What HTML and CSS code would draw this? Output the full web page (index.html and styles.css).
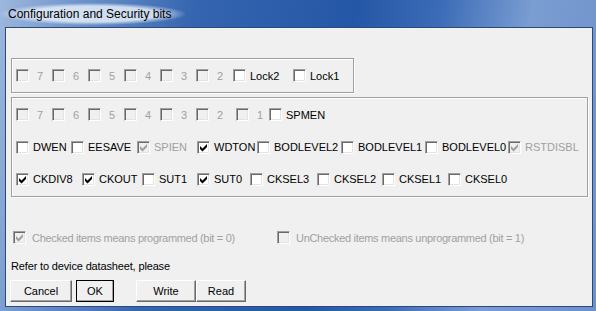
FILE: index.html
```html
<!DOCTYPE html>
<html lang="en">
<head>
<meta charset="UTF-8">
<title>Configuration and Security bits</title>
<link rel="stylesheet" href="styles.css">
</head>
<body>

<div class="window">
    <div class="titlebar"><span class="title">Configuration and Security bits</span></div>
    <div class="client">

        <div class="group lockbits">
            <div class="cb dis digit"><span class="box"></span><span class="txt">7</span></div>
            <div class="cb dis digit"><span class="box"></span><span class="txt">6</span></div>
            <div class="cb dis digit"><span class="box"></span><span class="txt">5</span></div>
            <div class="cb dis digit"><span class="box"></span><span class="txt">4</span></div>
            <div class="cb dis digit"><span class="box"></span><span class="txt">3</span></div>
            <div class="cb dis digit"><span class="box"></span><span class="txt">2</span></div>
            <div class="cb"><span class="box"></span><span class="txt">Lock2</span></div>
            <div class="cb"><span class="box"></span><span class="txt">Lock1</span></div>
        </div>

        <div class="group fusebits">
            <div class="row row-a">
                <div class="cb dis digit"><span class="box"></span><span class="txt">7</span></div>
                <div class="cb dis digit"><span class="box"></span><span class="txt">6</span></div>
                <div class="cb dis digit"><span class="box"></span><span class="txt">5</span></div>
                <div class="cb dis digit"><span class="box"></span><span class="txt">4</span></div>
                <div class="cb dis digit"><span class="box"></span><span class="txt">3</span></div>
                <div class="cb dis digit"><span class="box"></span><span class="txt">2</span></div>
                <div class="cb dis digit"><span class="box"></span><span class="txt">1</span></div>
                <div class="cb"><span class="box"></span><span class="txt">SPMEN</span></div>
            </div>
            <div class="row row-b">
                <div class="cb"><span class="box"></span><span class="txt">DWEN</span></div>
                <div class="cb"><span class="box"></span><span class="txt">EESAVE</span></div>
                <div class="cb dis"><span class="box"><svg viewBox="0 0 11 11" width="11" height="11"><polygon points="2,4 4.5,6.5 9,2 9,5 4.5,9.5 2,7"/></svg></span><span class="txt">SPIEN</span></div>
                <div class="cb clip"><span class="box"><svg viewBox="0 0 11 11" width="11" height="11"><polygon points="2,4 4.5,6.5 9,2 9,5 4.5,9.5 2,7"/></svg></span><span class="txt">WDTON</span></div>
                <div class="cb"><span class="box"></span><span class="txt">BODLEVEL2</span></div>
                <div class="cb"><span class="box"></span><span class="txt">BODLEVEL1</span></div>
                <div class="cb"><span class="box"></span><span class="txt">BODLEVEL0</span></div>
                <div class="cb dis"><span class="box"><svg viewBox="0 0 11 11" width="11" height="11"><polygon points="2,4 4.5,6.5 9,2 9,5 4.5,9.5 2,7"/></svg></span><span class="txt">RSTDISBL</span></div>
            </div>
            <div class="row row-c">
                <div class="cb"><span class="box"><svg viewBox="0 0 11 11" width="11" height="11"><polygon points="2,4 4.5,6.5 9,2 9,5 4.5,9.5 2,7"/></svg></span><span class="txt">CKDIV8</span></div>
                <div class="cb"><span class="box"><svg viewBox="0 0 11 11" width="11" height="11"><polygon points="2,4 4.5,6.5 9,2 9,5 4.5,9.5 2,7"/></svg></span><span class="txt">CKOUT</span></div>
                <div class="cb"><span class="box"></span><span class="txt">SUT1</span></div>
                <div class="cb"><span class="box"><svg viewBox="0 0 11 11" width="11" height="11"><polygon points="2,4 4.5,6.5 9,2 9,5 4.5,9.5 2,7"/></svg></span><span class="txt">SUT0</span></div>
                <div class="cb"><span class="box"></span><span class="txt">CKSEL3</span></div>
                <div class="cb"><span class="box"></span><span class="txt">CKSEL2</span></div>
                <div class="cb"><span class="box"></span><span class="txt">CKSEL1</span></div>
                <div class="cb"><span class="box"></span><span class="txt">CKSEL0</span></div>
            </div>
        </div>

        <div class="legend">
            <div class="cb dis"><span class="box"><svg viewBox="0 0 11 11" width="11" height="11"><polygon points="2,4 4.5,6.5 9,2 9,5 4.5,9.5 2,7"/></svg></span><span class="txt">Checked items means programmed (bit = 0)</span></div>
            <div class="cb dis"><span class="box"></span><span class="txt">UnChecked items means unprogrammed (bit = 1)</span></div>
        </div>

        <p class="note">Refer to device datasheet, please</p>

        <div class="buttons">
            <button class="btn btn-cancel">Cancel</button>
            <button class="btn btn-ok">OK</button>
            <button class="btn btn-write">Write</button>
            <button class="btn btn-read">Read</button>
        </div>

    </div>
</div>

</body>
</html>
```

FILE: styles.css
```css
body {
    margin: 0;
    font-family: "Liberation Sans", Arial, sans-serif;
    font-size: 11px;
    color: #000000;
}
.window {
    width: 596px;
    height: 311px;
    box-sizing: border-box;
    overflow: hidden;
    background: linear-gradient(100deg, #9db8de 0%, #6f94cb 12%, #3565b0 30%, #2457a6 55%, #3c6cb7 68%, #7a9dd2 82%, #6d92c8 100%);
}
.titlebar {
    height: 27px;
    display: flex;
    align-items: center;
    padding-left: 1px;
}
.title {
    font-family: "Liberation Sans", Arial, sans-serif;
    font-size: 12px;
    color: #000000;
    padding: 4px 14px 4px 7px;
    background: radial-gradient(ellipse at center, rgba(228, 237, 248, 0.85) 50%, rgba(228, 237, 248, 0) 72%);
}
.client {
    margin: 0 3px 0 5px;
    height: 280px;
    box-sizing: border-box;
    border: 1px solid #2b4a7a;
    background-color: #f0f0f0;
    padding: 30px 0 0 5px;
}
/* group frame: gray line with white line inside/outside (groove) */
.group {
    box-sizing: border-box;
    border: 1px solid #a0a0a0;
    box-shadow: inset 1px 1px #ffffff, 1px 1px #ffffff;
}
.lockbits {
    width: 343px;
    height: 35px;
    margin-bottom: 4px;
    padding-left: 4px;
    display: grid;
    grid-template-columns: 36px 36px 36px 36px 36px 37px 60px auto;
    align-items: center;
}
.fusebits {
    width: 577px;
    height: 100px;
    padding-left: 4px;
    display: grid;
    grid-template-rows: 33px 32px 32px;
}
.row {
    display: grid;
    align-items: center;
}
.row-a { grid-template-columns: 36px 36px 36px 36px 36px 40px 33px auto; }
.row-b { grid-template-columns: 55px 66px 60px 60px 84px 84px 83px auto; }
.row-c { grid-template-columns: 66px 60px 55px 53px 67px 65px 66px auto; }

.cb {
    display: flex;
    align-items: center;
    white-space: nowrap;
    overflow: hidden;
}
.cb.clip {
    margin-right: 2px;
}
.box {
    flex-shrink: 0;
    width: 13px;
    height: 13px;
    box-sizing: border-box;
    border: 1px solid;
    border-color: #a0a0a0 #ffffff #ffffff #a0a0a0;
    box-shadow: inset 1px 1px #696969, inset -1px -1px #e3e3e3;
    background-color: #ffffff;
    margin-right: 4px;
}
.box svg {
    display: block;
    fill: #000000;
}
.digit .txt {
    padding-left: 4px;
}
.dis .box {
    background-color: #f0f0f0;
}
.dis .box svg {
    fill: #a0a0a0;
}
.dis .txt {
    color: #a0a0a0;
}
.legend {
    display: grid;
    grid-template-columns: 264px auto;
    margin-top: 34px;
    padding-left: 2px;
}
.legend .box {
    margin-right: 6px;
}
.legend .txt {
    letter-spacing: -0.3px;
}
.note {
    margin: 15px 0 0 0;
    line-height: 14px;
    letter-spacing: -0.15px;
}
.buttons {
    display: flex;
    margin-top: 7px;
    margin-left: -1px;
}
.btn {
    font-family: "Liberation Sans", Arial, sans-serif;
    font-size: 11px;
    color: #000000;
    height: 22px;
    padding: 0;
    box-sizing: border-box;
    background-color: #f0f0f0;
    border: 1px solid;
    border-color: #ffffff #696969 #696969 #ffffff;
    box-shadow: inset -1px -1px #a0a0a0;
    border-radius: 0;
}
.btn-cancel { width: 62px; margin-right: 4px; }
.btn-ok {
    width: 38px;
    margin-right: 22px;
    outline: 1px solid #000000;
    outline-offset: -1px;
}
.btn-write { width: 60px; }
.btn-read { width: 50px; }
```
